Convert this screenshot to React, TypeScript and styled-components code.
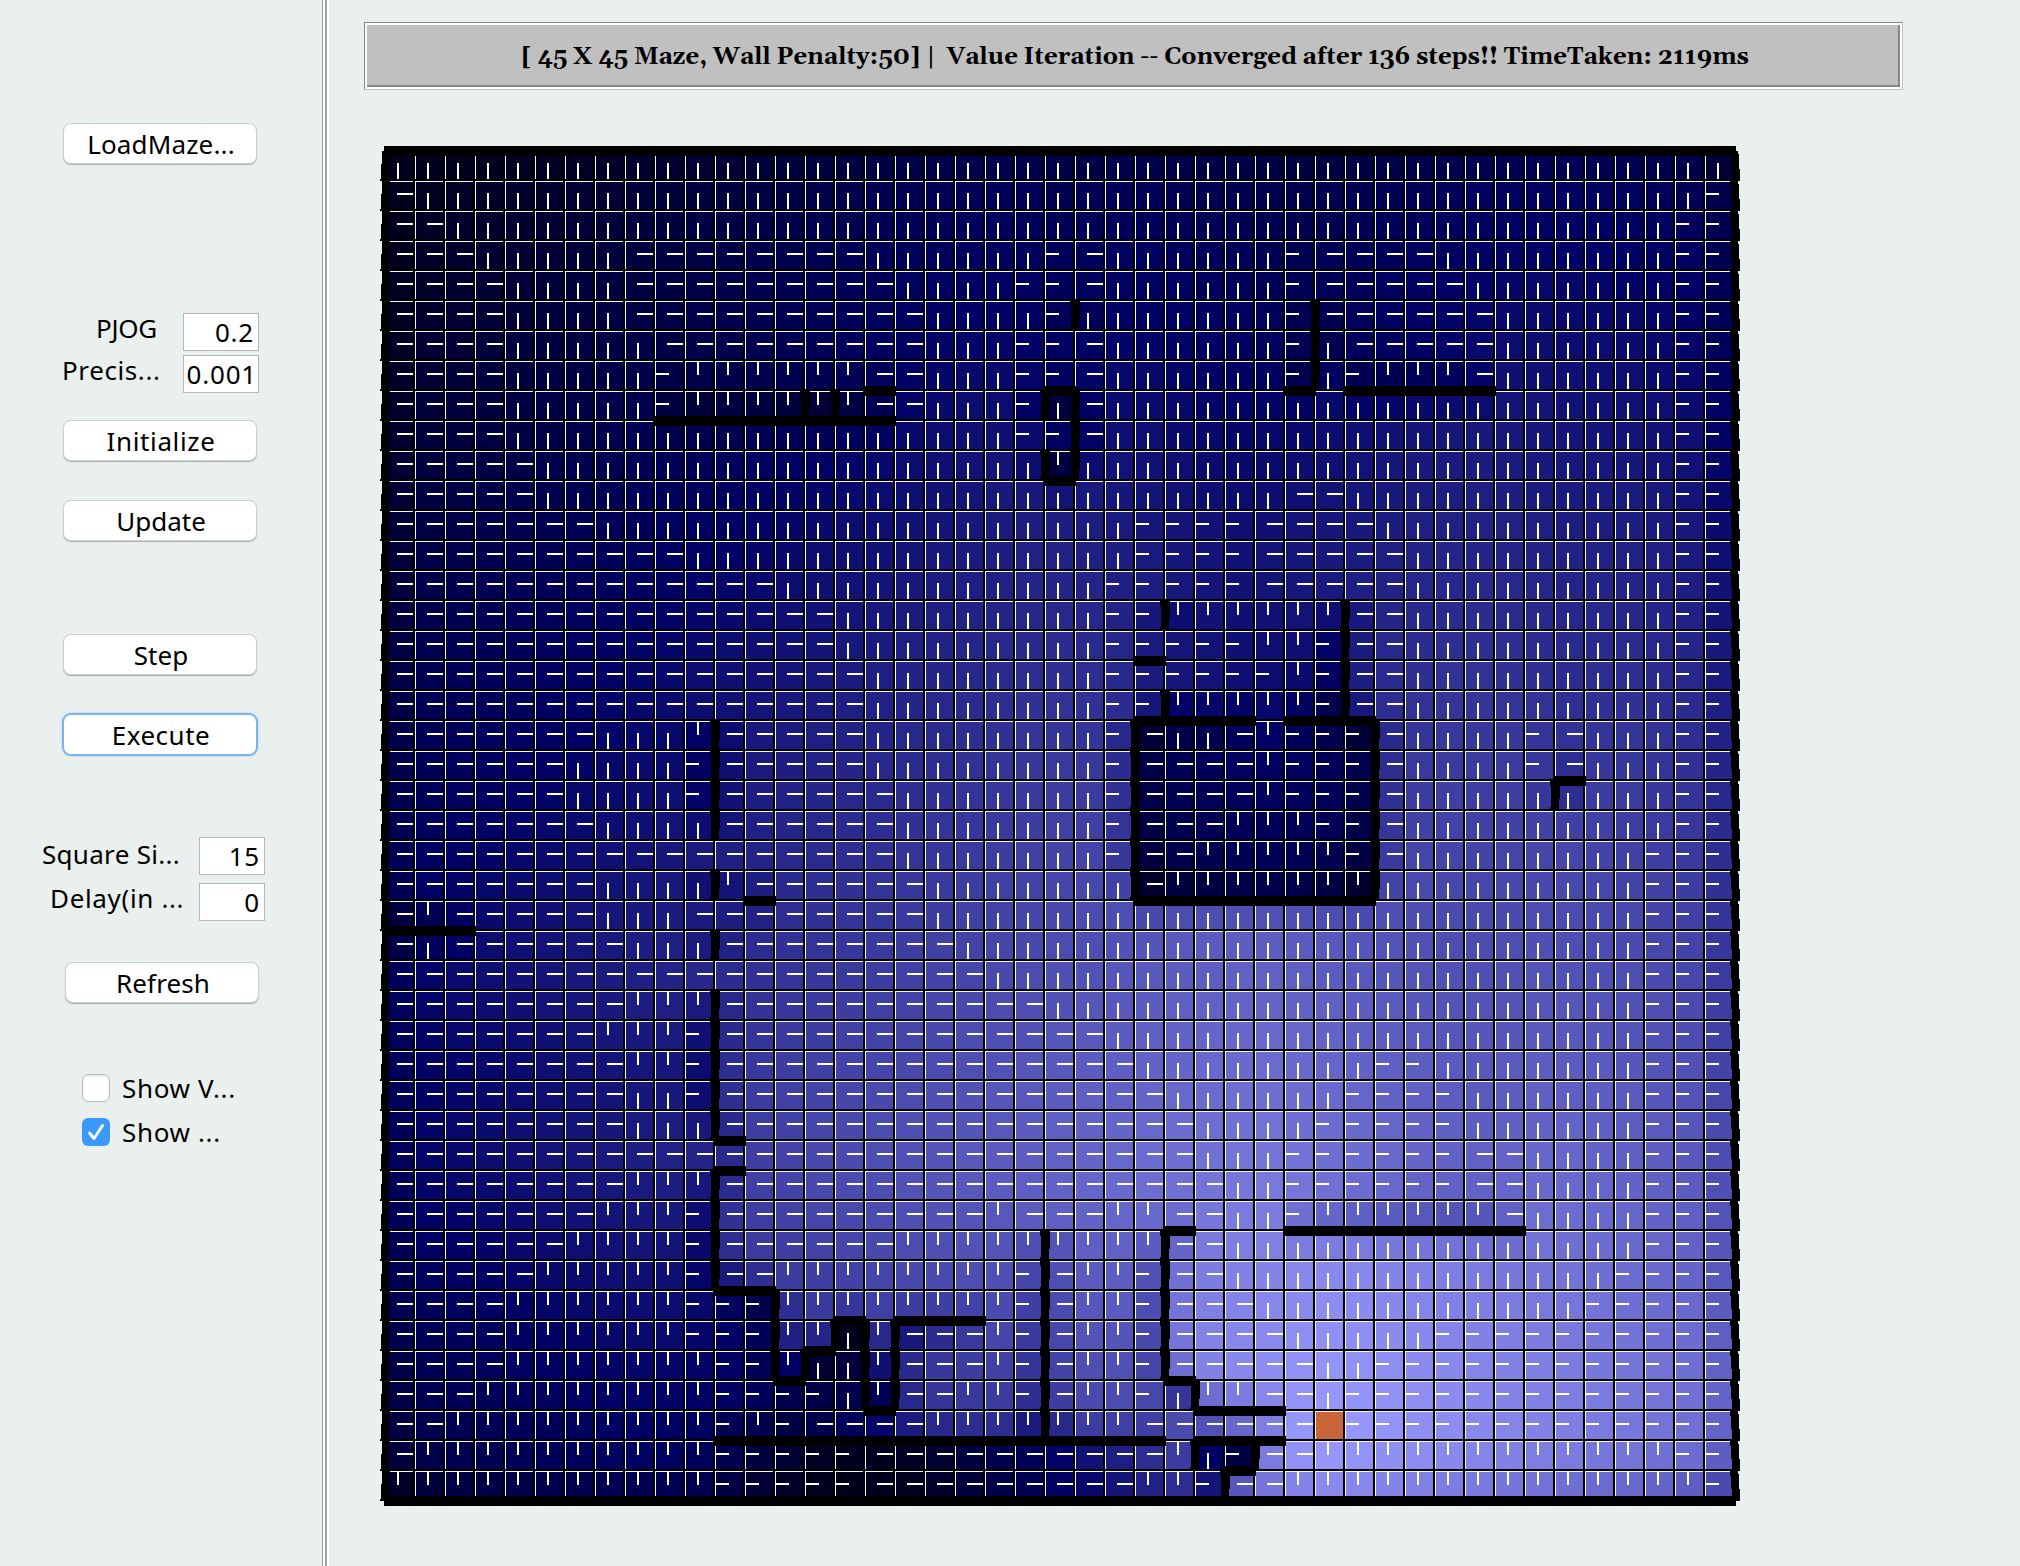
import React, { useMemo } from 'react';
import styled, { createGlobalStyle } from 'styled-components';

/* ---------- maze definition ---------- */

const SIZE = 45;
const GOAL = { row: 42, col: 31 };
const WALL_PENALTY = 50;
const PJOG = 0.2;
const PRECISION = 0.001;

// Horizontal walls: [row whose top edge is blocked, first column, last column]
const HORIZONTAL_WALLS: number[][] = [
  [0, 0, 44], [8, 16, 16], [8, 22, 22], [8, 30, 30], [8, 32, 36], [9, 9, 16],
  [11, 22, 22], [17, 25, 25], [19, 25, 28], [19, 30, 32], [21, 39, 39],
  [25, 12, 12], [25, 25, 32], [26, 0, 2], [33, 11, 11], [34, 11, 11],
  [36, 26, 26], [36, 30, 37], [38, 11, 12], [39, 15, 15], [39, 17, 19],
  [40, 14, 14], [41, 13, 13], [41, 26, 26], [42, 16, 16], [42, 27, 29],
  [43, 11, 25], [43, 27, 29], [44, 28, 28], [45, 0, 44],
];

// Vertical walls: [column whose left edge is blocked, first row, last row]
const VERTICAL_WALLS: number[][] = [
  [0, 0, 44], [11, 19, 22], [11, 24, 24], [11, 26, 26], [11, 28, 32],
  [11, 34, 37], [13, 38, 40], [14, 8, 8], [14, 40, 40], [15, 8, 8],
  [15, 39, 39], [16, 39, 41], [17, 39, 41], [22, 8, 8], [22, 10, 10],
  [22, 36, 42], [23, 5, 5], [23, 8, 10], [25, 19, 24], [26, 15, 15],
  [26, 18, 18], [26, 36, 40], [27, 41, 41], [27, 43, 43], [28, 44, 44],
  [29, 43, 43], [31, 5, 7], [32, 15, 18], [33, 19, 24], [39, 21, 21],
  [45, 0, 44],
];

const key = (a: number, b: number) => a * 100 + b;

/* ---------- value iteration ---------- */

function solveMaze() {
  const top = new Set<number>();
  const left = new Set<number>();
  HORIZONTAL_WALLS.forEach(([r, a, b]) => {
    for (let c = a; c <= b; c++) top.add(key(r, c));
  });
  VERTICAL_WALLS.forEach(([c, a, b]) => {
    for (let r = a; r <= b; r++) left.add(key(r, c));
  });

  let values: number[] = new Array(SIZE * SIZE).fill(0);
  const policy: number[] = new Array(SIZE * SIZE).fill(-1);
  for (let step = 0; step < 500; step++) {
    const next = values.slice();
    let delta = 0;
    for (let r = 0; r < SIZE; r++) {
      for (let c = 0; c < SIZE; c++) {
        if (r === GOAL.row && c === GOAL.col) continue;
        const i = r * SIZE + c;
        const blocked = [
          top.has(key(r, c)), left.has(key(r, c + 1)),
          top.has(key(r + 1, c)), left.has(key(r, c)),
        ];
        const target = [i - SIZE, i + 1, i + SIZE, i - 1];
        const cost = blocked.map((b, k) => (b ? WALL_PENALTY + values[i] : values[target[k]]));
        let best = Infinity;
        for (let a = 0; a < 4; a++) {
          let expected = 1;
          for (let k = 0; k < 4; k++) expected += (k === a ? 1 - PJOG : PJOG / 3) * cost[k];
          if (expected < best - 1e-9) {
            best = expected;
            policy[i] = a;
          }
        }
        next[i] = best;
        delta = Math.max(delta, Math.abs(best - values[i]));
      }
    }
    values = next;
    if (delta < PRECISION) break;
  }
  return { values, policy };
}

/* ---------- maze drawing ---------- */

const CELL = 30;
const PAD_X = 7;
const PAD_Y = 7;
const px = (c: number) => PAD_X + c * CELL;
const py = (r: number) => PAD_Y + r * CELL;
const box = (x: number, y: number, w: number, h: number) => `M${x} ${y}h${w}v${h}h${-w}z`;

function shade(value: number, peak: number) {
  const blue = Math.max(30, Math.round(255 - (255 * value) / peak));
  const rest = Math.max(0, blue - 100);
  return `rgb(${rest},${rest},${blue})`;
}

// Action marks for up, right, down, left
const MARKS = [
  [12, 0, 2, 14], [12, 12, 16, 2], [12, 12, 2, 16], [0, 12, 14, 2],
];

// Walls lean a pixel or two along their length: [from y, height, from x, width]
const WEST_EDGE = [[0, 5, -3, 8], [5, 8, -3, 7], [13, 11, -4, 8], [24, 4, -4, 7], [28, 2, -5, 8]];
const EAST_EDGE = [[0, 3, -5, 8], [3, 2, -5, 9], [5, 13, -4, 8], [18, 6, -3, 8], [24, 6, -3, 8]];
const INNER_WALL = [[-2, 2, -2, 7], [0, 5, -5, 10], [5, 13, -4, 9], [18, 8, -4, 8], [26, 2, -5, 9], [28, 2, -5, 5]];

const MazeDrawing = styled.svg`
  display: block;
  flex: none;
  margin: 54px 0 0 14px;
  shape-rendering: crispEdges;
`;

function Maze() {
  const { cells, borders, marks, walls } = useMemo(() => {
    const { values, policy } = solveMaze();
    const peak = Math.max(...values);
    let borders = '';
    let marks = '';
    let walls = '';
    const cells = values.map((value, i) => {
      const r = Math.floor(i / SIZE);
      const c = i % SIZE;
      borders += box(px(c), py(r), 28, 28);
      const goal = r === GOAL.row && c === GOAL.col;
      if (!goal) {
        const [dx, dy, w, h] = MARKS[policy[i]];
        marks += box(px(c) + dx, py(r) + dy, w, h);
      }
      return { x: px(c) + 1, y: py(r) + 1, fill: goal ? '#c86438' : shade(value, peak) };
    });
    HORIZONTAL_WALLS.forEach(([r, a, b]) => {
      const start = px(a) - (a === 0 ? 1 : 2);
      walls += box(start, py(r) - 5, px(b + 1) + 1 - start, 10);
    });
    VERTICAL_WALLS.forEach(([c, a, b]) => {
      const parts = c === 0 ? WEST_EDGE : c === SIZE ? EAST_EDGE : INNER_WALL;
      for (let r = a; r <= b; r++) {
        parts.forEach(([y, h, x, w]) => {
          walls += box(px(c) + x, py(r) + y, w, h);
        });
      }
    });
    return { cells, borders, marks, walls };
  }, []);

  return (
    <MazeDrawing width={1366} height={1366} viewBox="0 0 1366 1366">
      <rect x={PAD_X} y={PAD_Y} width={1350} height={1350} fill="#000" />
      <path d={borders} fill="#f0f6f0" />
      {cells.map((cell, i) => (
        <rect key={i} x={cell.x} y={cell.y} width={27} height={27} fill={cell.fill} />
      ))}
      <path d={marks} fill="#fff" />
      <path d={walls} fill="#000" />
    </MazeDrawing>
  );
}

/* ---------- page ---------- */

const GlobalStyle = createGlobalStyle`
  body {
    margin: 0;
    background: #eaf0ee;
  }
`;

const Window = styled.div`
  display: flex;
  width: 2020px;
  height: 1566px;
  overflow: hidden;
  background: #eaf0ee;
  color: #000;
  font: 26px/39px "Noto Sans", "Open Sans", sans-serif;
`;

const Sidebar = styled.aside`
  box-sizing: border-box;
  display: flex;
  flex-direction: column;
  width: 322px;
  height: 100%;
  padding-top: 124px;
`;

const Divider = styled.div`
  box-sizing: border-box;
  width: 7px;
  border-left: 1px solid #a3a3a3;
  border-right: 2px solid #fff;
  background: linear-gradient(to right, #fff 2px, #a3a3a3 2px);
`;

const Button = styled.button<{ $gap?: number; $indent?: number; $spacing?: number; $focused?: boolean }>`
  flex: none;
  width: 192px;
  height: 39px;
  margin: ${p => p.$gap ?? 0}px 0 0 ${p => p.$indent ?? 64}px;
  padding: 1px 0 0 2px;
  border: 0;
  border-radius: 7px;
  background: #fff;
  box-shadow: ${p => (p.$focused
    ? '0 0 0 2px #7fb3ec, 0 0 2px 2px #8fbcee'
    : '0 0 0 1px #cdd1d0, 0 1px 1px 1px #a9adac')};
  color: #000;
  font: inherit;
  letter-spacing: ${p => p.$spacing ?? 0}px;
  text-align: center;
`;

const Field = styled.label<{ $gap: number; $indent: number; $labelWidth: number }>`
  display: grid;
  grid-template-columns: ${p => p.$labelWidth}px auto;
  justify-content: start;
  align-items: start;
  margin: ${p => p.$gap}px 0 0 ${p => p.$indent}px;
`;

const FieldLabel = styled.span<{ $spacing?: number; $drop?: number }>`
  margin-top: ${p => p.$drop ?? 0}px;
  line-height: 31px;
  letter-spacing: ${p => p.$spacing ?? 0}px;
  white-space: pre;
`;

const FieldInput = styled.input<{ $width: number; $end?: number }>`
  box-sizing: border-box;
  width: ${p => p.$width}px;
  height: 38px;
  padding: 0 ${p => p.$end ?? 4}px 0 0;
  border: 1px solid #b4b8b7;
  border-radius: 0;
  outline: 0;
  background: #fff;
  color: #000;
  font: inherit;
  line-height: 36px;
  letter-spacing: 0.8px;
  text-align: right;
`;

const Options = styled.div`
  display: flex;
  flex-direction: column;
  margin: 64px 0 0 82px;
`;

const Option = styled.label`
  display: flex;
  align-items: center;
  gap: 12px;
  height: 44px;
  letter-spacing: 0.65px;
`;

const CheckBox = styled.span<{ $checked?: boolean }>`
  box-sizing: border-box;
  display: grid;
  place-items: center;
  width: 28px;
  height: 28px;
  border: ${p => (p.$checked ? '0' : '1px solid #b9bcbb')};
  border-radius: 6px;
  background: ${p => (p.$checked ? '#3b99fc' : '#fff')};
  box-shadow: ${p => (p.$checked ? 'none' : 'inset 0 1px 2px #dcdcdc')};
`;

const Workspace = styled.main`
  display: flex;
  flex-direction: column;
  align-items: flex-start;
  padding: 22px 0 0 35px;
`;

const StatusFrame = styled.header`
  box-sizing: border-box;
  width: 1539px;
  height: 68px;
  border: 1px solid #c0c0c0;
  border-top-color: #868686;
  border-left-color: #868686;
`;

const StatusBar = styled.div`
  box-sizing: border-box;
  display: flex;
  padding-left: 154px;
  height: 66px;
  border: 2px solid #fff;
  background: #c0c0c0;
  box-shadow: inset -2px -2px 0 #868686;
`;

const StatusText = styled.h1`
  margin: 0;
  font: bold 24px/64px "Gelasio", "Georgia", "Liberation Serif", serif;
  font-variant-numeric: oldstyle-nums;
  letter-spacing: 0.05px;
  word-spacing: -0.5px;
  white-space: pre;
`;

export default function App() {
  return (
    <>
      <GlobalStyle />
      <Window>
        <Sidebar>
          <Button $spacing={0.15}>LoadMaze...</Button>
          <Field $gap={150} $indent={96} $labelWidth={87}>
            <FieldLabel $spacing={-0.3}>PJOG</FieldLabel>
            <FieldInput $width={76} defaultValue="0.2" />
          </Field>
          <Field $gap={4} $indent={62} $labelWidth={121}>
            <FieldLabel $spacing={0.6}>Precis...</FieldLabel>
            <FieldInput $width={76} $end={1} defaultValue="0.001" />
          </Field>
          <Button $gap={28} $spacing={0.65}>Initialize</Button>
          <Button $gap={41}>Update</Button>
          <Button $gap={95}>Step</Button>
          <Button $gap={41} $spacing={0.5} $focused>Execute</Button>
          <Field $gap={83} $indent={42} $labelWidth={157}>
            <FieldLabel $spacing={0.3} $drop={2}>Square Si...</FieldLabel>
            <FieldInput $width={66} defaultValue="15" />
          </Field>
          <Field $gap={8} $indent={50} $labelWidth={149}>
            <FieldLabel $spacing={0.65}>Delay(in ...</FieldLabel>
            <FieldInput $width={66} defaultValue="0" />
          </Field>
          <Button $gap={42} $indent={66} $spacing={0.1}>Refresh</Button>
          <Options>
            <Option>
              <CheckBox />
              Show V...
            </Option>
            <Option>
              <CheckBox $checked>
                <svg width="28" height="28" viewBox="0 0 28 28" fill="none">
                  <path d="M7.5 15l4.5 5.5L20.5 7.5" stroke="#fff" strokeWidth="2.8" strokeLinecap="round" strokeLinejoin="round" />
                </svg>
              </CheckBox>
              Show ...
            </Option>
          </Options>
        </Sidebar>
        <Divider />
        <Workspace>
          <StatusFrame>
            <StatusBar>
              <StatusText>
                {'[ 45 X 45 Maze, Wall Penalty:50] |  Value Iteration -- Converged after 136 steps!! TimeTaken: 2119ms'}
              </StatusText>
            </StatusBar>
          </StatusFrame>
          <Maze />
        </Workspace>
      </Window>
    </>
  );
}
